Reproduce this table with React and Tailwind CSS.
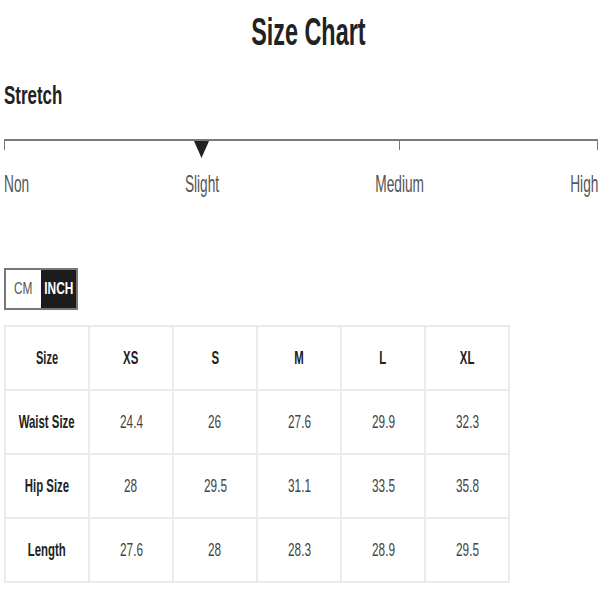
import React from 'react';

const sizes = ['XS', 'S', 'M', 'L', 'XL'];

const rows = [
  { label: 'Waist Size', values: ['24.4', '26', '27.6', '29.9', '32.3'] },
  { label: 'Hip Size', values: ['28', '29.5', '31.1', '33.5', '35.8'] },
  { label: 'Length', values: ['27.6', '28', '28.3', '28.9', '29.5'] },
];

// the screenshot uses a narrow face, so Arial widths are squeezed horizontally
function Narrow({ children, className = '' }) {
  return <span className={`inline-block whitespace-nowrap ${className}`}>{children}</span>;
}

export default function App() {
  return (
    <div className="w-[600px] h-[600px] bg-white overflow-hidden font-['Liberation_Sans',Arial,sans-serif]">
      {/* Title */}
      <div className="pt-[12px] h-[52px] flex justify-center pl-[16px]">
        <Narrow className="text-[39px] leading-[40px] font-bold text-[#222] scale-x-[0.6]">Size Chart</Narrow>
      </div>

      {/* Stretch scale */}
      <div className="ml-[4px] w-[594px] mt-[28px]">
        <div className="h-[30px]">
          <Narrow className="text-[26px] leading-[30px] font-bold text-[#222] scale-x-[0.65] origin-left">Stretch</Narrow>
        </div>

        <div className="mt-[29px] relative h-[20px]">
          <div className="h-[2px] bg-[#7a7a7a]" />
          <div className="flex">
            <div className="w-[1px] h-[9px] bg-[#777]" />
            <div className="flex-[2]" />
            <div className="w-[1px] h-[9px] bg-[#777]" />
            <div className="flex-1" />
            <div className="w-[1px] h-[9px] bg-[#777]" />
          </div>
          {/* marker */}
          <svg className="absolute left-[190px] top-[2px]" width="15" height="17" viewBox="0 0 15 17">
            <polygon points="0,0 15,0 7.5,17" fill="#222" />
          </svg>
        </div>

        <div className="mt-[11px] grid grid-cols-6 text-[24px] leading-[28px] text-[#555]">
          <div className="text-left">
            <Narrow className="scale-x-[0.57] origin-left">Non</Narrow>
          </div>
          <div className="col-span-2 text-center">
            <Narrow className="scale-x-[0.57]">Slight</Narrow>
          </div>
          <div className="col-span-2 text-center">
            <Narrow className="scale-x-[0.57]">Medium</Narrow>
          </div>
          <div className="text-right">
            <Narrow className="scale-x-[0.57] origin-right">High</Narrow>
          </div>
        </div>
      </div>

      {/* Unit toggle */}
      <div className="mt-[70px] ml-[4px] flex w-[74px] h-[42px] border-2 border-[#777]">
        <div className="w-[35px] shrink-0 flex items-center justify-center bg-white text-[17px] text-[#555]">
          <Narrow className="scale-x-[0.7]">CM</Narrow>
        </div>
        <div className="flex-1 min-w-0 flex items-center justify-center bg-[#1c1c1c] text-[17px] font-bold text-white">
          <Narrow className="scale-x-[0.7]">INCH</Narrow>
        </div>
      </div>

      {/* Size table */}
      <div className="mt-[15px] ml-[4px] w-[506px] grid grid-cols-6 border-t-2 border-l-2 border-[#ebebeb]">
        <div className="h-[64px] border-r-2 border-b-2 border-[#ebebeb] flex items-center justify-center text-[19px] font-bold text-[#222]">
          <Narrow className="scale-x-[0.58]">Size</Narrow>
        </div>
        {sizes.map((s) => (
          <div key={s} className="h-[64px] border-r-2 border-b-2 border-[#ebebeb] flex items-center justify-center text-[19px] font-bold text-[#222]">
            <Narrow className="scale-x-[0.6]">{s}</Narrow>
          </div>
        ))}
        {rows.map((r) => (
          <React.Fragment key={r.label}>
            <div className="h-[64px] border-r-2 border-b-2 border-[#ebebeb] flex items-center justify-center text-[19px] font-bold text-[#222]">
              <Narrow className="scale-x-[0.6]">{r.label}</Narrow>
            </div>
            {r.values.map((v, i) => (
              <div key={i} className="h-[64px] border-r-2 border-b-2 border-[#ebebeb] flex items-center justify-center text-[19px] text-[#444]">
                <Narrow className="scale-x-[0.62]">{v}</Narrow>
              </div>
            ))}
          </React.Fragment>
        ))}
      </div>
    </div>
  );
}
